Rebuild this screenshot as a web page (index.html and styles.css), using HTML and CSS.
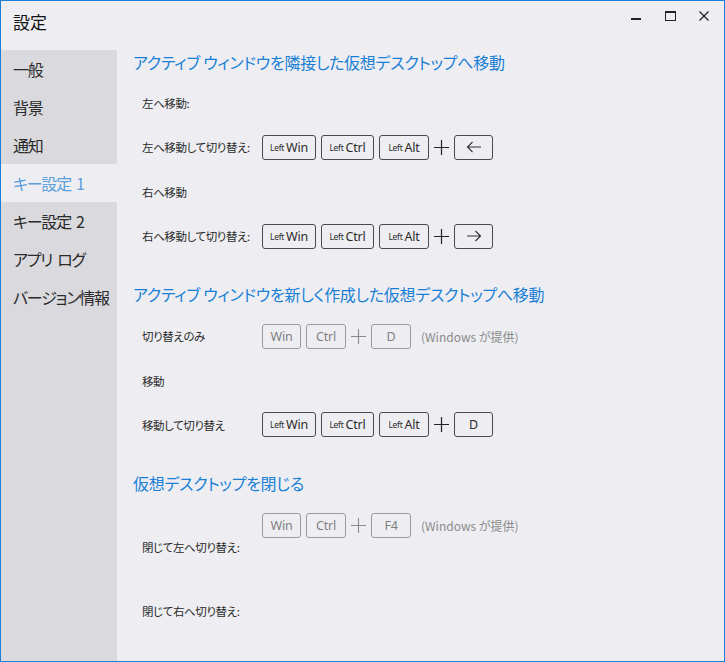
FILE: index.html
```html
<!DOCTYPE html>
<html lang="ja">
<head>
<meta charset="utf-8">
<link rel="stylesheet" href="styles.css">
</head>
<body>
<div class="window">
  <div class="titlebar">
    <div class="title">設定</div>
    <div class="controls">
      <svg class="ctl" width="14" height="14" viewBox="0 0 14 14"><rect x="2" y="7" width="10" height="2" fill="#222"/></svg>
      <svg class="ctl" width="14" height="14" viewBox="0 0 14 14"><rect x="2.5" y="0.5" width="10" height="9" fill="none" stroke="#222" stroke-width="1"/><rect x="2" y="0" width="11" height="2" fill="#222"/></svg>
      <svg class="ctl" width="14" height="14" viewBox="0 0 14 14"><path d="M2.5 0.5 L11.5 9.5 M11.5 0.5 L2.5 9.5" stroke="#222" stroke-width="1.3" fill="none"/></svg>
    </div>
  </div>
  <div class="main">
    <nav class="sidebar">
      <div class="nav-item">一般</div>
      <div class="nav-item">背景</div>
      <div class="nav-item">通知</div>
      <div class="nav-item active">キー設定<span class="sp">1</span></div>
      <div class="nav-item">キー設定<span class="sp">2</span></div>
      <div class="nav-item">アプリ<span class="sp">ログ</span></div>
      <div class="nav-item">バージョン情報</div>
      <div class="nav-fill"></div>
    </nav>
    <section class="content">
      <h2 class="heading">アクティブ ウィンドウを隣接した仮想デスクトップへ移動</h2>
      <div class="row"><div class="label">左へ移動:</div></div>
      <div class="row">
        <div class="label">左へ移動して切り替え:</div>
        <div class="keys">
          <span class="key w54"><small>Left</small>Win</span>
          <span class="key w53"><small>Left</small>Ctrl</span>
          <span class="key w50"><small>Left</small>Alt</span>
          <svg class="plus" width="17" height="17" viewBox="0 0 17 17"><path d="M8.5 1 V16 M1 8.5 H16" stroke="#222" stroke-width="1.2"/></svg>
          <span class="key w39"><svg width="16" height="12" viewBox="0 0 16 12"><path d="M15 6 H1.5 M6.5 1 L1.5 6 L6.5 11" stroke="#333" stroke-width="1.1" fill="none"/></svg></span>
        </div>
      </div>
      <div class="row"><div class="label">右へ移動</div></div>
      <div class="row">
        <div class="label">右へ移動して切り替え:</div>
        <div class="keys">
          <span class="key w54"><small>Left</small>Win</span>
          <span class="key w53"><small>Left</small>Ctrl</span>
          <span class="key w50"><small>Left</small>Alt</span>
          <svg class="plus" width="17" height="17" viewBox="0 0 17 17"><path d="M8.5 1 V16 M1 8.5 H16" stroke="#222" stroke-width="1.2"/></svg>
          <span class="key w39"><svg width="16" height="12" viewBox="0 0 16 12"><path d="M1 6 H14.5 M9.5 1 L14.5 6 L9.5 11" stroke="#333" stroke-width="1.1" fill="none"/></svg></span>
        </div>
      </div>

      <h2 class="heading gap">アクティブ ウィンドウを新しく作成した仮想デスクトップへ移動</h2>
      <div class="row">
        <div class="label">切り替えのみ</div>
        <div class="keys">
          <span class="key off w39">Win</span>
          <span class="key off w40">Ctrl</span>
          <svg class="plus" width="17" height="17" viewBox="0 0 17 17"><path d="M8.5 1 V16 M1 8.5 H16" stroke="#8a8a8a" stroke-width="1.1"/></svg>
          <span class="key off w40">D</span>
          <span class="note">(Windows が提供)</span>
        </div>
      </div>
      <div class="row"><div class="label">移動</div></div>
      <div class="row">
        <div class="label">移動して切り替え</div>
        <div class="keys">
          <span class="key w54"><small>Left</small>Win</span>
          <span class="key w53"><small>Left</small>Ctrl</span>
          <span class="key w50"><small>Left</small>Alt</span>
          <svg class="plus" width="17" height="17" viewBox="0 0 17 17"><path d="M8.5 1 V16 M1 8.5 H16" stroke="#222" stroke-width="1.2"/></svg>
          <span class="key w39">D</span>
        </div>
      </div>

      <h2 class="heading gap">仮想デスクトップを閉じる</h2>
      <div class="row tall">
        <div class="label">閉じて左へ切り替え:</div>
        <div class="keys top">
          <span class="key off w39">Win</span>
          <span class="key off w40">Ctrl</span>
          <svg class="plus" width="17" height="17" viewBox="0 0 17 17"><path d="M8.5 1 V16 M1 8.5 H16" stroke="#8a8a8a" stroke-width="1.1"/></svg>
          <span class="key off w40">F4</span>
          <span class="note">(Windows が提供)</span>
        </div>
      </div>
      <div class="row short"><div class="label">閉じて右へ切り替え:</div></div>
    </section>
  </div>
</div>
</body>
</html>
```

FILE: styles.css
```css
* { box-sizing: border-box; }
html, body {
  margin: 0;
  padding: 0;
  background: #eeeef2;
}
body {
  font-family: "Noto Sans CJK JP", "Noto Sans", sans-serif;
  font-feature-settings: "palt";
  color: #2b2b2b;
}
.window {
  width: 725px;
  height: 662px;
  border: 1px solid #1a7fd6;
  background: #eeeef2;
  display: flex;
  flex-direction: column;
  overflow: hidden;
}
.titlebar {
  height: 49px;
  display: flex;
  justify-content: space-between;
  align-items: flex-start;
}
.title {
  font-size: 17px;
  line-height: 24px;
  padding: 9px 0 0 12px;
  color: #111;
}
.controls {
  display: flex;
  gap: 20px;
  padding: 10px 13px 0 0;
}
.ctl { display: block; }
.main {
  flex: 1;
  display: flex;
  min-height: 0;
}
.sidebar {
  width: 116px;
  display: flex;
  flex-direction: column;
  background: #d9d9de;
}
.nav-item {
  height: 38px;
  line-height: 38px;
  padding-left: 12px;
  font-size: 16px;
  color: #2a2a2a;
  white-space: nowrap;
  letter-spacing: -1.2px;
}
.nav-item .sp { margin-left: 5px; }
.nav-item.active {
  background: #eeeef2;
  color: #5b9fdd;
}
.nav-fill { flex: 1; }
.content {
  flex: 1;
  display: flex;
  flex-direction: column;
}
.heading {
  margin: 0 0 7px 0;
  padding-left: 16px;
  height: 24px;
  line-height: 24px;
  font-size: 16px;
  font-weight: normal;
  color: #1a7fd6;
  letter-spacing: -0.28px;
  white-space: nowrap;
}
.heading.gap { margin-top: 24px; margin-bottom: 8px; }
.row {
  height: 44.3px;
  display: flex;
  align-items: center;
  padding-left: 25px;
}
.row.tall { height: 88px; }
.row.short { height: 40px; }
.label {
  width: 120px;
  flex: none;
  font-size: 11.5px;
  letter-spacing: -0.4px;
  line-height: 16px;
  color: #2b2b2b;
  white-space: nowrap;
}
.keys {
  display: flex;
  align-items: center;
  gap: 5px;
}
.keys.top {
  align-self: flex-start;
  margin-top: 10px;
}
.key {
  height: 25px;
  display: inline-flex;
  align-items: center;
  justify-content: center;
  border: 1px solid #4a4a4a;
  border-radius: 3px;
  font-family: "Noto Sans", sans-serif;
  font-size: 12.5px;
  color: #2b2b2b;
  letter-spacing: -0.2px;
}
.key small {
  font-size: 8.5px;
  margin-right: 2px;
  letter-spacing: -0.3px;
}
.key.off {
  border-color: #9a9a9a;
  color: #808080;
}
.w54 { width: 54px; }
.w53 { width: 53px; }
.w50 { width: 50px; }
.w39 { width: 39px; }
.w40 { width: 40px; }
.plus { display: block; margin: 0 -1px; }
.note {
  margin-left: 5px;
  font-size: 12px;
  color: #8a8a8a;
}
```
